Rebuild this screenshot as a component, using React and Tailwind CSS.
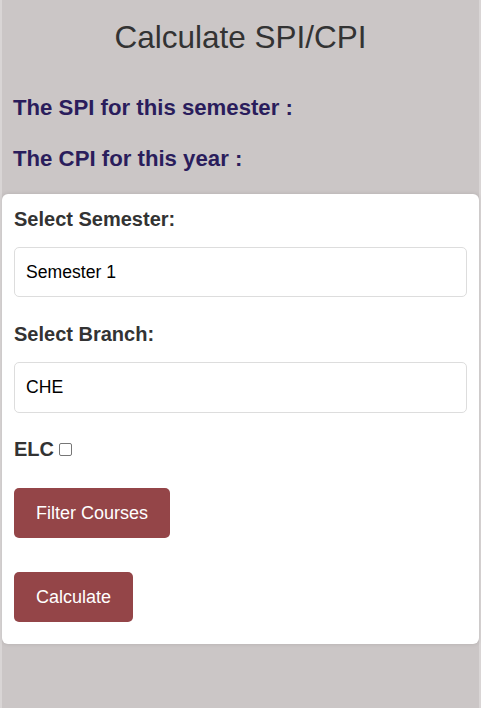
import React, { useState } from "react";

const App = () => {
  const [semester, setSemester] = useState("Semester 1");
  const [branch, setBranch] = useState("CHE");
  const [elc, setElc] = useState(false);

  return (
    <div className="min-h-screen bg-[#d9d5d5] px-[2px] font-['Liberation_Sans',Arial,sans-serif]">
      <div className="min-h-screen bg-[#cbc6c6] pt-[19px]">
        {/* Header */}
        <h1 className="text-center text-[31.5px] leading-[36px] text-[#333333]">
          Calculate SPI/CPI
        </h1>

        <h2 className="mt-[40px] px-[11px] text-[22.2px] leading-[25px] font-bold text-[#2a1d5c]">
          The SPI for this semester :
        </h2>
        <h2 className="mt-[26px] px-[11px] text-[22.2px] leading-[25px] font-bold text-[#2a1d5c]">
          The CPI for this year :
        </h2>

        {/* Form card */}
        <div className="mt-[23px] rounded-[6px] bg-white px-[12px] pt-[14px] pb-[22px] shadow-[0_0_4px_rgba(0,0,0,0.12)]">
          <label className="block text-[20px] leading-[23px] font-bold text-[#333333]">
            Select Semester:
          </label>
          <select
            value={semester}
            onChange={(e) => setSemester(e.target.value)}
            className="mt-[16px] block h-[50px] w-full appearance-none rounded-[5px] border border-[#dddddd] bg-white px-[11px] text-[17.6px] text-black outline-none"
          >
            <option>Semester 1</option>
            <option>Semester 2</option>
          </select>

          <label className="mt-[26px] block text-[20px] leading-[23px] font-bold text-[#333333]">
            Select Branch:
          </label>
          <select
            value={branch}
            onChange={(e) => setBranch(e.target.value)}
            className="mt-[16px] block h-[51px] w-full appearance-none rounded-[5px] border border-[#dddddd] bg-white px-[11px] text-[17.6px] text-black outline-none"
          >
            <option>CHE</option>
            <option>CSE</option>
          </select>

          <div className="mt-[25px] flex items-center">
            <label className="text-[20px] leading-[23px] font-bold text-[#333333]">
              ELC
            </label>
            <input
              type="checkbox"
              checked={elc}
              onChange={(e) => setElc(e.target.checked)}
              className="ml-[5px] h-[13px] w-[13px] appearance-none rounded-[2px] border border-[#767676] bg-white"
            />
          </div>

          <button className="mt-[27px] block h-[50px] rounded-[5px] bg-[#944548] px-[22px] text-[18px] text-white">
            Filter Courses
          </button>

          <button className="mt-[34px] block h-[50px] rounded-[5px] bg-[#944548] px-[22px] text-[18px] text-white">
            Calculate
          </button>
        </div>
      </div>
    </div>
  );
};

export default App;
